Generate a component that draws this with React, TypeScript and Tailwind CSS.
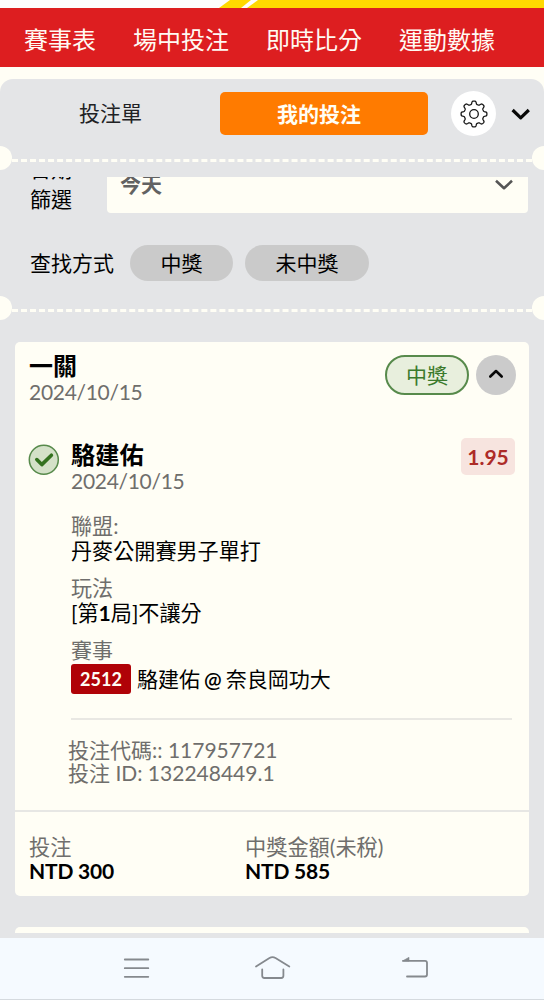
import type { ReactNode } from "react";

const LATO = "font-[Lato,'Noto_Sans_CJK_TC',sans-serif]";

const navItems = ["賽事表", "場中投注", "即時比分", "運動數據"];

const details = [
  { label: "聯盟:", value: "丹麥公開賽男子單打" },
  { label: "玩法", value: "[第1局]不讓分" },
];

function PromoStrip() {
  return (
    <svg className="block h-2 w-full shrink-0" viewBox="0 0 544 8" preserveAspectRatio="none">
      <rect width="544" height="8" fill="#fdfdfd" />
      <path d="M219 8L230 0H251L241 8Z" fill="#ffd900" />
      <path d="M247 8L258 0H544V8Z" fill="#ffd900" />
    </svg>
  );
}

function Perforation() {
  return (
    <div className="relative flex h-6 shrink-0 items-center overflow-hidden">
      <div className="-ml-3 size-6 shrink-0 rounded-full bg-[#fffef5]" />
      <div className="mt-[4px] h-0 flex-1 border-t-[3px] border-dashed border-[#fffef5]" />
      <div className="-mr-3 size-6 shrink-0 rounded-full bg-[#fffef5]" />
    </div>
  );
}

function GearIcon() {
  const points: string[] = [];
  const teeth = 8;
  for (let i = 0; i < 160; i++) {
    const a = (i / 160) * Math.PI * 2 - Math.PI / 2;
    const wave = Math.tanh(2.2 * Math.cos(teeth * a)) / Math.tanh(2.2);
    const r = 11.4 + wave * 1.5;
    points.push(`${(14 + r * Math.cos(a)).toFixed(2)},${(14 + r * Math.sin(a)).toFixed(2)}`);
  }
  return (
    <svg className="size-7" viewBox="0 0 28 28" fill="none" stroke="#161616" strokeWidth="1.3" strokeLinejoin="round">
      <polygon points={points.join(" ")} />
      <circle cx="14" cy="14" r="4.3" />
    </svg>
  );
}

function Chip({ children, className }: { children: ReactNode; className: string }) {
  return (
    <button className={`flex h-9 items-center justify-center rounded-full bg-[#cacaca] text-[21px] leading-9 text-black ${className}`}>
      {children}
    </button>
  );
}

function TicketHeader() {
  return (
    <div className="flex h-[96px] shrink-0 pl-[14px] pr-[13px] pt-[11px]">
      <div className="flex-1">
        <div className="text-[24px] font-bold leading-[26px] text-black">一關</div>
        <div className="text-[21px] leading-[26px] tracking-[-0.3px] text-[#6f6e6c]">2024/10/15</div>
      </div>
      <div className="mt-0.5 flex h-10 gap-[7px]">
        <span className="flex h-10 w-[84px] items-center justify-center rounded-full border-2 border-[#578a4b] bg-[#e8efdd] text-[21px] leading-9 text-[#3b7a2c]">
          中獎
        </span>
        <button className="flex size-10 items-center justify-center rounded-full bg-[#cbcbcb]">
          <svg className="size-5" viewBox="0 0 20 20" fill="none" stroke="#080808" strokeWidth="2.6" strokeLinecap="round" strokeLinejoin="round">
            <path d="M4.3 11.5L10 6L15.7 11.5" />
          </svg>
        </button>
      </div>
    </div>
  );
}

function Selection() {
  return (
    <div className="flex h-[372px] shrink-0 pl-[13px] pr-[14px]">
      <svg className="mt-[6px] size-8 shrink-0" viewBox="0 0 32 32" fill="none">
        <circle cx="15.8" cy="15.8" r="14.5" fill="#d4e1c8" stroke="#578a4b" strokeWidth="1.5" />
        <path d="M8.8 15.6L13.8 20.6L23.4 11.2" stroke="#34721f" strokeWidth="3.6" strokeLinecap="round" strokeLinejoin="round" />
      </svg>
      <div className="ml-[11px] flex-1">
        <div className="flex h-[74px] justify-between">
          <div className="pt-[4px]">
            <div className="text-[24.2px] font-bold leading-[26px] text-black">駱建佑</div>
            <div className="text-[21px] leading-[26px] tracking-[-0.3px] text-[#6f6e6c]">2024/10/15</div>
          </div>
          <span className="h-[37px] w-[54px] rounded-[5px] bg-[#f7e4df] text-center text-[21px] font-bold leading-[38px] text-[#ad2b27]">
            1.95
          </span>
        </div>
        {details.map((d) => (
          <div key={d.label} className="h-[62px] text-[21.1px]">
            <div className="h-[25px] leading-[27px] text-[#6f6e6c]">{d.label}</div>
            <div className="h-[25px] leading-[28px] text-black">
              {d.value.split("1").map((part, i) => (
                <span key={part}>
                  {i > 0 && <b>1</b>}
                  {part}
                </span>
              ))}
            </div>
          </div>
        ))}
        <div className="text-[21px] leading-[28px] text-[#6f6e6c]">賽事</div>
        <div className="flex h-[30px] items-center">
          <span className="h-[30px] w-[60px] rounded-[3px] bg-[#b00207] text-center text-[18px] font-bold leading-[31px] text-[#fffef5]">
            2512
          </span>
          <span className="ml-[6px] whitespace-nowrap text-[21px] leading-[30px] text-black">
            駱建佑<b className="mx-[4px] font-semibold">@</b>奈良岡功大
          </span>
        </div>
        <div className="mr-[3px] mt-[24px] h-[2px] bg-[#e9e8e3]" />
        <div className="-ml-[3px] mt-[18px] whitespace-nowrap text-[21px] leading-[23px] text-[#6f6e6c]">
          <div>投注代碼:: 117957721</div>
          <div>投注 ID: 132248449.1</div>
        </div>
      </div>
    </div>
  );
}

function Amount({ label, value }: { label: string; value: string }) {
  return (
    <div className="w-[216px] whitespace-nowrap text-[21.2px] leading-[23px]">
      <div className="text-[#6f6e6c]">{label}</div>
      <div className="text-[21px] font-bold tracking-[-0.2px] text-black">{value}</div>
    </div>
  );
}

function SystemBar() {
  return (
    <nav className="flex h-[62px] shrink-0 items-center border-b border-[#d5dadf] bg-[#f5faff]">
      <svg className="h-[62px] w-full" viewBox="0 938 544 62" fill="none" stroke="#85898e" strokeWidth="1.8" strokeLinecap="round" strokeLinejoin="round">
        <path d="M124.8 959.5H148.3M124.8 968.2H148.3M124.8 976.8H148.3" />
        <path d="M256 966.5L269.5 958.1Q272.5 956.3 275.5 958.1L289.3 966.5M262.2 969.5V975.8Q262.2 978 264.4 978H281.2Q283.4 978 283.4 975.8V969.5" />
        <path d="M403 960.8H425Q427 960.8 427 962.8V974.5Q427 976.5 425 976.5H407" />
        <path d="M402.8 960.8L409 957.3V960.8Z" fill="#85898e" strokeWidth="0.6" />
      </svg>
    </nav>
  );
}

export default function App() {
  return (
    <div className={`flex h-[1000px] w-[544px] flex-col overflow-hidden bg-[#fffef5] ${LATO}`} lang="zh-TW">
      <PromoStrip />
      <nav className="flex h-[59px] shrink-0 gap-[37px] bg-[#dd1e20] pl-6 text-[24px] leading-[63px] text-[#fffaf3]">
        {navItems.map((item) => (
          <a key={item} className="whitespace-nowrap">
            {item}
          </a>
        ))}
      </nav>
      <main className="mt-3 flex min-h-0 flex-1 flex-col rounded-t-[13px] bg-[#e4e5e7]">
        <div className="flex h-[67px] shrink-0 pt-3">
          <button className="h-[44px] w-[220px] pl-px text-center text-[21px] leading-[44px] text-[#202124]">投注單</button>
          <button className="mt-px h-[43px] w-[208px] rounded-[5px] bg-[#ff7b00] pr-2.5 text-center text-[21px] font-bold leading-[43px] text-[#fffef5]">
            我的投注
          </button>
          <button className="ml-[23px] flex size-[45px] items-center justify-center rounded-full bg-white">
            <GearIcon />
          </button>
          <svg className="ml-[14px] mt-[13px] size-[22px]" viewBox="0 0 22 22" fill="none" stroke="#080808" strokeWidth="3.2" strokeLinecap="butt" strokeLinejoin="round">
            <path d="M2.6 6L10.7 13.8L18.8 6" />
          </svg>
        </div>
        <Perforation />
        <div className="mt-[7px] h-9 shrink-0 overflow-hidden">
          <div className="-mt-[24px] flex h-[60px] pl-[30px]">
            <div className="w-[77px] pt-px text-[21px] leading-[30px] text-black">
              日期
              <br />
              篩選
            </div>
            <div className="flex h-[60px] w-[421px] justify-between rounded-[4px] bg-[#fffef5] pl-[13px] pr-[13px] text-[21px] font-bold leading-[60px] text-[#626262]">
              <span className="font-['Noto_Sans_CJK_TC',sans-serif]">今天</span>
              <svg className="mt-[21px] size-[22px]" viewBox="0 0 22 22" fill="none" stroke="#555555" strokeWidth="2.6" strokeLinejoin="round">
                <path d="M3 6.8L11 14.2L19 6.8" />
              </svg>
            </div>
          </div>
        </div>
        <div className="mt-8 flex h-9 shrink-0 items-center pl-[30px]">
          <span className="w-[100px] text-[21px] leading-9 text-black">查找方式</span>
          <Chip className="w-[103px]">中獎</Chip>
          <Chip className="ml-3 w-[124px]">未中獎</Chip>
        </div>
        <div className="h-[15px] shrink-0" />
        <Perforation />
        <section className="ml-[15px] mt-[22px] flex h-[554px] w-[514px] shrink-0 flex-col rounded-[5px] bg-[#fffef5]">
          <TicketHeader />
          <Selection />
          <div className="flex flex-1 border-t-2 border-[#e7e7e4] pl-[14px] pt-[24px]">
            <Amount label="投注" value="NTD 300" />
            <Amount label="中獎金額(未稅)" value="NTD 585" />
          </div>
        </section>
        <div className="ml-[15px] mt-[31px] h-[6px] w-[514px] shrink-0 rounded-t-[5px] bg-[#fffef5]" />
      </main>
      <SystemBar />
    </div>
  );
}
